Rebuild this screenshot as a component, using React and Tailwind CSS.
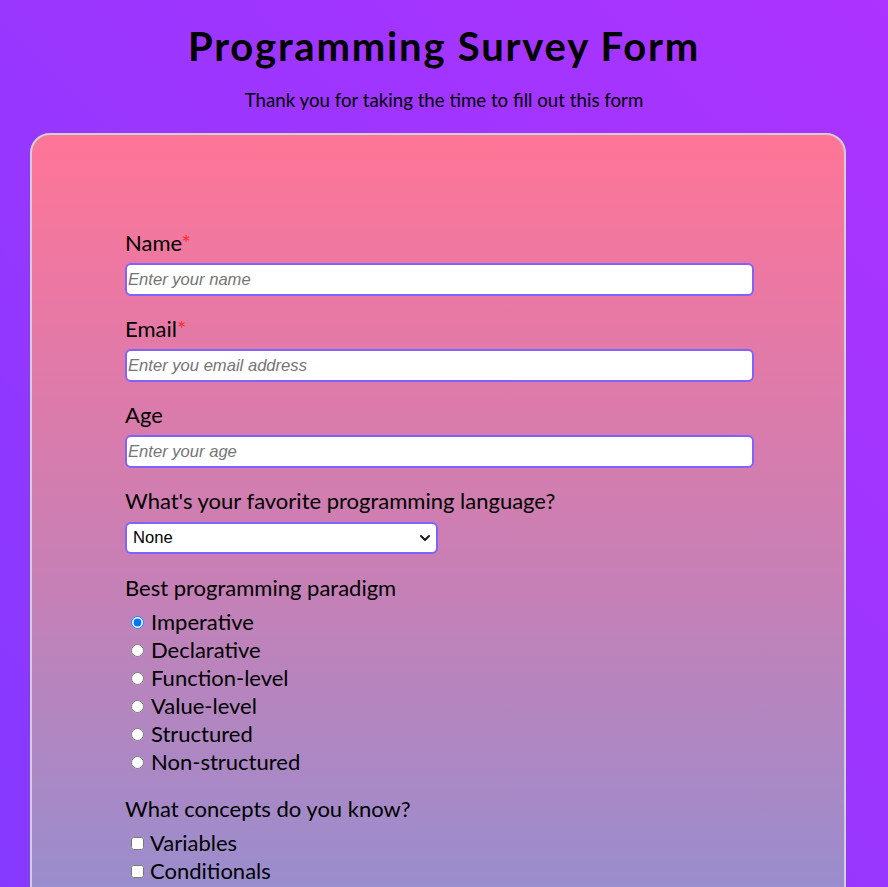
import { useState } from 'react';
import { ChevronDown } from 'lucide-react';

const paradigms = ['Imperative', 'Declarative', 'Function-level', 'Value-level', 'Structured', 'Non-structured'];
const concepts = ['Variables', 'Conditionals', 'Loops', 'Functions', 'Classes', 'Objects'];

export default function App() {
  const [paradigm, setParadigm] = useState('Imperative');
  const [known, setKnown] = useState([]);

  const toggle = (c) => setKnown(prev => prev.includes(c) ? prev.filter(x => x !== c) : [...prev, c]);

  return (
    <div className="min-h-screen bg-fixed bg-[linear-gradient(to_top_right,#8539ff,#ad33ff)] font-['Lato',sans-serif] text-black pt-[23px] pb-10">
      <h1 className="text-center text-[40px] leading-[46px] font-bold tracking-[1.8px]">Programming Survey Form</h1>
      <p className="text-center text-[18.7px] leading-[21px] mt-[21px]">Thank you for taking the time to fill out this form</p>

      <div className="ml-[30px] w-[816px] mt-[22px] rounded-[20px] border-2 border-[#d0d0d0] bg-[linear-gradient(180deg,#ff7597_0px,#e479a6_200px,#c680b6_450px,#9b8dcd_745px,#6fa0f0_1300px)]">
        <form className="w-[629px] ml-[93px] pt-[94px] pb-16" onSubmit={e => e.preventDefault()}>
          {/* text fields */}
          <label className="block text-[22px] leading-[28px]">Name<span className="text-[#ff2e2e]">*</span></label>
          <input className="block w-full h-[33px] mt-[6px] px-[1px] bg-white border-2 border-[#7e63ff] rounded-md font-['Liberation_Sans',sans-serif] text-[16.6px] placeholder:italic placeholder:text-[#757575]" placeholder="Enter your name" required />

          <label className="block text-[22px] leading-[28px] mt-[19px]">Email<span className="text-[#ff2e2e]">*</span></label>
          <input type="email" className="block w-full h-[33px] mt-[6px] px-[1px] bg-white border-2 border-[#7e63ff] rounded-md font-['Liberation_Sans',sans-serif] text-[16.6px] placeholder:italic placeholder:text-[#757575]" placeholder="Enter you email address" required />

          <label className="block text-[22px] leading-[28px] mt-[19px]">Age</label>
          <input type="number" className="block w-full h-[33px] mt-[6px] px-[1px] bg-white border-2 border-[#7e63ff] rounded-md font-['Liberation_Sans',sans-serif] text-[16.6px] placeholder:italic placeholder:text-[#757575]" placeholder="Enter your age" />

          <label className="block text-[22px] leading-[28px] mt-[19px]">What's your favorite programming language?</label>
          <div className="relative w-[313px] mt-[7px]">
            <select className="block w-full h-[32px] pl-[6px] appearance-none bg-white border-2 border-[#7e63ff] rounded-md font-['Liberation_Sans',sans-serif] text-[16.6px]">
              <option>None</option>
              <option>JavaScript</option>
              <option>Python</option>
              <option>C++</option>
              <option>Java</option>
            </select>
            <ChevronDown className="absolute right-[5px] top-[8px] w-[16px] h-[16px] pointer-events-none text-[#1a1a1a]" strokeWidth={3} />
          </div>

          <div className="text-[22px] leading-[28px] mt-[20px]">Best programming paradigm</div>
          <div className="mt-[6px]">
            {paradigms.map(p => (
              <label key={p} className="flex items-center text-[22px] leading-[28px]">
                <input type="radio" name="paradigm" className="ml-[6px] mr-[7px] w-[13px] h-[13px]" checked={paradigm === p} onChange={() => setParadigm(p)} />
                {p}
              </label>
            ))}
          </div>

          <div className="text-[22px] leading-[28px] mt-[19px]">What concepts do you know?</div>
          <div className="mt-[6px]">
            {concepts.map(c => (
              <label key={c} className="flex items-center text-[22px] leading-[28px]">
                <input type="checkbox" className="ml-[6px] mr-[6px] w-[13px] h-[13px]" checked={known.includes(c)} onChange={() => toggle(c)} />
                {c}
              </label>
            ))}
          </div>

          <label className="block text-[22px] leading-[28px] mt-[19px]">Any comments or suggestions?</label>
          <textarea className="block w-full h-[120px] mt-[6px] p-1 bg-white border-2 border-[#7e63ff] rounded-md font-['Liberation_Sans',sans-serif] text-[16px] placeholder:italic" placeholder="Enter your comment here..." />

          <button className="block mt-6 px-6 py-2 bg-[#7e63ff] text-white text-[20px] rounded-md">Submit</button>
        </form>
      </div>
    </div>
  );
}
